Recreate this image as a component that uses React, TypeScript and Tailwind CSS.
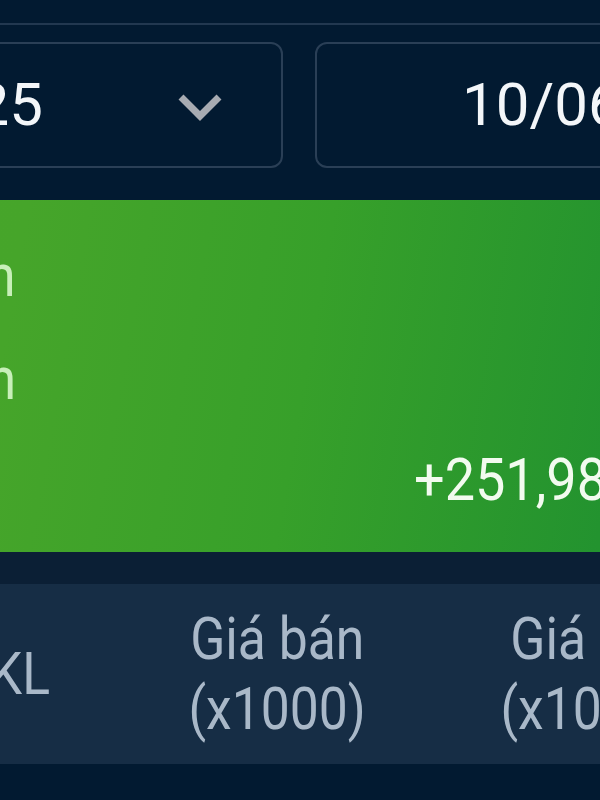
import React from "react";

const Txt = ({
  children,
  className = "scale-x-[0.86]",
}: {
  children: React.ReactNode;
  className?: string;
}) => (
  <span className={`inline-block whitespace-nowrap ${className}`}>{children}</span>
);

const Chevron = () => (
  <svg width="48" height="32" viewBox="0 0 48 32" className="mt-[6px] shrink-0">
    <polyline
      points="5,5 24,24 43,5"
      fill="none"
      stroke="#a7abb2"
      strokeWidth="7"
      strokeLinejoin="miter"
    />
  </svg>
);

export default function App() {
  return (
    <div className="w-[600px] h-[800px] overflow-hidden bg-[#021a31] font-['Roboto',sans-serif] text-[60px] leading-[60px]">
      {/* header separator */}
      <div className="h-[23px]" />
      <div className="h-[2px] bg-[#223850]" />

      {/* date filters */}
      <div className="flex gap-[32px] pt-[17px] -ml-[200px] w-[1200px]">
        <div className="w-[483px] h-[126px] shrink-0 rounded-[12px] border-2 border-[#2a3f56] flex items-center">
          <div className="w-[241px] shrink-0 flex justify-end text-[#f3f6f9]">
            <Txt className="">10/05/2025</Txt>
          </div>
          <div className="flex-1" />
          <div className="mr-[57px] flex">
            <Chevron />
          </div>
        </div>
        <div className="w-[600px] h-[126px] shrink-0 rounded-[12px] border-2 border-[#2a3f56] flex items-center">
          <div className="ml-[145px] text-[#f3f6f9]">
            <Txt className="">10/06/2025</Txt>
          </div>
        </div>
      </div>

      {/* summary card */}
      <div className="mt-[32px] h-[352px] -ml-[600px] w-[1400px] bg-[linear-gradient(100deg,#4aa82a_0%,#46a52a_43%,#37a02a_64%,#23932f_86%,#1f9030_100%)] flex flex-col pt-[46px]">
        <div className="flex">
          <div className="w-[616px] shrink-0 flex justify-end text-[#c8efb9]">
            <Txt className="scale-x-[0.86] origin-right">Tổng giá trị bán</Txt>
          </div>
        </div>
        <div className="flex mt-[43px]">
          <div className="w-[616px] shrink-0 flex justify-end text-[#c8efb9]">
            <Txt className="scale-x-[0.86] origin-right">Tổng giá trị vốn</Txt>
          </div>
        </div>
        <div className="flex mt-[41px]">
          <div className="w-[520px] shrink-0 flex justify-end text-[#c8efb9]">
            <Txt className="scale-x-[0.86] origin-right">Lãi/lỗ</Txt>
          </div>
          <div className="ml-[494px] text-[#f2fbef]">
            <Txt className="scale-x-[0.9] origin-left">+251,980,000</Txt>
          </div>
        </div>
      </div>

      {/* table header */}
      <div className="h-[32px] bg-[#0b1f35]" />
      <div className="h-[180px] bg-[#162d45] flex items-center -ml-[50px] w-[900px] text-[#a9b8c8] leading-[70px]">
        <div className="w-[100px] shrink-0 flex justify-end">
          <Txt className="scale-x-[0.86] origin-right">KL</Txt>
        </div>
        <div className="ml-[80px] w-[294px] shrink-0 flex flex-col items-center">
          <Txt>Giá bán</Txt>
          <Txt>(x1000)</Txt>
        </div>
        <div className="-ml-[4px] w-[338px] shrink-0 flex flex-col items-center">
          <div className="flex gap-[20px] ml-[22px]">
            <Txt className="scale-x-[0.86] origin-right">Giá</Txt>
            <Txt className="scale-x-[0.86] origin-left">vốn</Txt>
          </div>
          <Txt>(x1000)</Txt>
        </div>
      </div>
    </div>
  );
}
